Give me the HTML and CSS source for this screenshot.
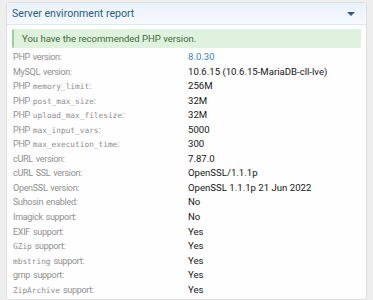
FILE: index.html
```html
<!DOCTYPE html>
<html lang="en">
  <head>
    <meta charset="UTF-8" />
    <title>Server environment report</title>
    <link rel="stylesheet" href="styles.css">
  </head>
  <body>
    <div class="block">
      <div class="block-header">
        <h2 class="block-title">Server environment report</h2>
        <span class="toggle"></span>
      </div>
      <div class="block-body">
        <div class="message success">You have the recommended PHP version.</div>
        <dl class="pairs">
          <dt>PHP version:</dt><dd><a href="#">8.0.30</a></dd>
          <dt>MySQL version:</dt><dd>10.6.15 (10.6.15-MariaDB-cll-lve)</dd>
          <dt>PHP <code>memory_limit</code>:</dt><dd>256M</dd>
          <dt>PHP <code>post_max_size</code>:</dt><dd>32M</dd>
          <dt>PHP <code>upload_max_filesize</code>:</dt><dd>32M</dd>
          <dt>PHP <code>max_input_vars</code>:</dt><dd>5000</dd>
          <dt>PHP <code>max_execution_time</code>:</dt><dd>300</dd>
          <dt>cURL version:</dt><dd>7.87.0</dd>
          <dt>cURL SSL version:</dt><dd>OpenSSL/1.1.1p</dd>
          <dt>OpenSSL version:</dt><dd>OpenSSL 1.1.1p 21 Jun 2022</dd>
          <dt>Suhosin enabled:</dt><dd>No</dd>
          <dt>Imagick support:</dt><dd>No</dd>
          <dt>EXIF support:</dt><dd>Yes</dd>
          <dt><code>GZip</code> support:</dt><dd>Yes</dd>
          <dt><code>mbstring</code> support:</dt><dd>Yes</dd>
          <dt>gmp support:</dt><dd>Yes</dd>
          <dt><code>ZipArchive</code> support:</dt><dd>Yes</dd>
        </dl>
      </div>
    </div>
  </body>
</html>
```

FILE: styles.css
```css
* {
  margin: 0;
  padding: 0;
  box-sizing: border-box;
}

body {
  background: #eeeeee;
  font-family: Roboto, "Liberation Sans", sans-serif;
  padding: 2px 6px 0;
}

.block {
  background: #fefefe;
  border: 1px solid #e0e0e0;
  border-radius: 3px;
}

.block-header {
  display: flex;
  align-items: center;
  height: 22px;
  padding: 0 11px 0 5px;
  background: linear-gradient(to bottom, #e9f2fb, #f6f9fd);
  border-bottom: 1px solid #dfe7ef;
}

.block-title {
  flex: 1;
  font-size: 10.6px;
  font-weight: normal;
  color: #2a5c88;
}

/* dropdown caret */
.toggle {
  width: 0;
  height: 0;
  border-left: 4px solid transparent;
  border-right: 4px solid transparent;
  border-top: 4px solid #2a5c88;
}

.block-body {
  padding: 4px 5px 2px 5px;
}

.message {
  font-size: 9.5px;
  line-height: 11px;
  padding: 4px 8px;
  border-radius: 2px;
  margin-bottom: 2px;
}

.success {
  background: #dff2de;
  border-left: 2px solid #9ccf98;
  color: #3c6b38;
}

.pairs {
  display: grid;
  grid-template-columns: 175px 1fr;
  grid-auto-rows: 14.55px;
  font-size: 9.6px;
  line-height: 14.55px;
  padding-left: 1px;
}

.pairs dt {
  color: #8f8f8f;
  font-size: 9px;
  letter-spacing: -0.3px;
  word-spacing: 1px;
  overflow: hidden;
}

.pairs dd {
  color: #161616;
}

.pairs a {
  color: #3a86c4;
  text-decoration: none;
}

code {
  font-family: "DejaVu Sans Mono", monospace;
  font-size: 7.8px;
  line-height: 1;
  letter-spacing: 0;
}
```
